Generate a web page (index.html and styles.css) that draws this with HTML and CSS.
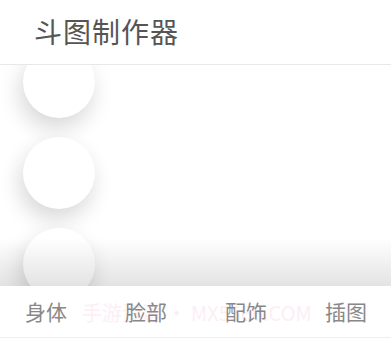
FILE: index.html
```html
<!DOCTYPE html>
<html>
<head>
<meta charset="utf-8">
<link rel="stylesheet" href="styles.css">
</head>
<body>
<div class="app">
  <header class="header"><h1 class="title">斗图制作器</h1></header>
  <main class="content">
    <div class="circles">
      <div class="circle"></div>
      <div class="circle"></div>
      <div class="circle"></div>
    </div>
    <div class="fade"></div>
  </main>
  <nav class="tabs">
    <span class="tab">身体</span>
    <span class="tab">脸部</span>
    <span class="tab">配饰</span>
    <span class="tab">插图</span>
    <span class="watermark">手游资源 • MX5566.COM</span>
  </nav>
</div>
</body>
</html>
```
FILE: styles.css
```css
html, body {
  margin: 0;
  padding: 0;
  background: #fff;
}
.app {
  width: 391px;
  height: 339px;
  overflow: hidden;
  font-family: "Noto Sans CJK SC", "Noto Sans", sans-serif;
}
.header {
  height: 65px;
  border-bottom: 1px solid #e8e8e8;
  display: flex;
  align-items: center;
  padding-left: 34px;
  box-sizing: border-box;
  position: relative;
  z-index: 2;
  background: #fff;
}
.title {
  margin: 0;
  font-size: 28px;
  font-weight: 400;
  color: #555;
  letter-spacing: 1px;
  line-height: 1;
  margin-top: -2px;
}
.content {
  height: 221px;
  position: relative;
  overflow: hidden;
  background: #fff;
}
.circles {
  display: flex;
  flex-direction: column;
  gap: 19px;
  padding-left: 23px;
  margin-top: -19px;
}
.circle {
  width: 72px;
  height: 72px;
  border-radius: 50%;
  background: #fff;
  box-shadow: -3px 10px 22px rgba(0, 0, 0, 0.16);
}
.fade {
  position: absolute;
  left: 0;
  right: 0;
  bottom: 0;
  height: 48px;
  background: linear-gradient(to bottom, rgba(0,0,0,0), rgba(0,0,0,0.11));
  pointer-events: none;
}
.tabs {
  height: 52px;
  border-bottom: 1px solid #eee;
  box-sizing: border-box;
  display: flex;
  align-items: center;
  gap: 57px;
  padding-left: 25px;
  position: relative;
  background: #fff;
}
.tab {
  font-size: 21px;
  color: #888;
  line-height: 1;
  width: 43px;
  white-space: nowrap;
  position: relative;
  z-index: 1;
}
.watermark {
  position: absolute;
  left: 82px;
  top: 17px;
  font-size: 20px;
  line-height: 1;
  color: #fdeef6;
  white-space: nowrap;
  font-family: "Noto Sans CJK SC", "Noto Sans", sans-serif;
  z-index: 0;
}
```
